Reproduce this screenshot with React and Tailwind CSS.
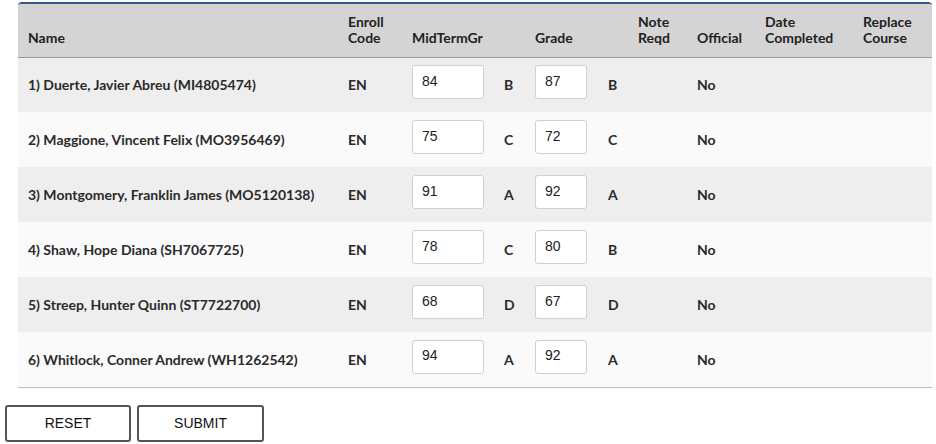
import React from 'react'

const ROWS = [
  { name: '1) Duerte, Javier Abreu (MI4805474)', mid: '84', midL: 'B', grade: '87', gradeL: 'B' },
  { name: '2) Maggione, Vincent Felix (MO3956469)', mid: '75', midL: 'C', grade: '72', gradeL: 'C' },
  { name: '3) Montgomery, Franklin James (MO5120138)', mid: '91', midL: 'A', grade: '92', gradeL: 'A' },
  { name: '4) Shaw, Hope Diana (SH7067725)', mid: '78', midL: 'C', grade: '80', gradeL: 'B' },
  { name: '5) Streep, Hunter Quinn (ST7722700)', mid: '68', midL: 'D', grade: '67', gradeL: 'D' },
  { name: '6) Whitlock, Conner Andrew (WH1262542)', mid: '94', midL: 'A', grade: '92', gradeL: 'A' },
]

const th = 'px-[10px] pb-[11px] text-left align-bottom font-bold leading-[16px] whitespace-nowrap'
const td = 'px-[10px] align-middle'

export default function App() {
  return (
    <div className="bg-white w-[936px] h-[444px] overflow-hidden text-[#222]" style={{ fontFamily: 'Lato, "Open Sans", sans-serif' }}>
      {/* Grade roster */}
      <div className="ml-[18px] mt-[2px] w-[914px] border-t-2 border-[#34578f] rounded-t-[4px] overflow-hidden">
        <table className="w-full table-fixed border-collapse text-[14px]">
          <colgroup>
            <col className="w-[320px]" />
            <col className="w-[64px]" />
            <col className="w-[92px]" />
            <col className="w-[31px]" />
            <col className="w-[73px]" />
            <col className="w-[30px]" />
            <col className="w-[59px]" />
            <col className="w-[68px]" />
            <col className="w-[98px]" />
            <col className="w-[79px]" />
          </colgroup>
          <thead>
            <tr className="h-[53px] bg-[#d4d4d4] border-b border-[#9a9a9a]">
              <th className={th}>Name</th>
              <th className={th}>Enroll<br />Code</th>
              <th className={th} colSpan={2}>MidTermGr</th>
              <th className={th} colSpan={2}>Grade</th>
              <th className={th}>Note<br />Reqd</th>
              <th className={th}>Official</th>
              <th className={th}>Date<br />Completed</th>
              <th className={th}>Replace<br />Course</th>
            </tr>
          </thead>
          <tbody className="font-bold text-[#2a2a2a]">
            {ROWS.map((r, i) => (
              <tr key={r.name} className={`h-[55px] ${i % 2 === 0 ? 'bg-[#eeeeee]' : 'bg-[#fafafa]'} ${i === ROWS.length - 1 ? 'border-b border-[#bdbdbd]' : ''}`}>
                <td className={`${td} whitespace-nowrap`}>{r.name}</td>
                <td className={td}>EN</td>
                <td className={td}>
                  <input
                    defaultValue={r.mid}
                    className="block w-[72px] h-[34px] -mt-[5px] px-[9px] pb-[3px] bg-white border border-[#d0d0d0] rounded-[3px] text-[14px] font-normal text-[#222] outline-none"
                    style={{ fontFamily: '"Liberation Sans", Arial, sans-serif' }}
                  />
                </td>
                <td className={td}>{r.midL}</td>
                <td className={td}>
                  <input
                    defaultValue={r.grade}
                    className="block w-[52px] h-[34px] -mt-[5px] px-[9px] pb-[3px] bg-white border border-[#d0d0d0] rounded-[3px] text-[14px] font-normal text-[#222] outline-none"
                    style={{ fontFamily: '"Liberation Sans", Arial, sans-serif' }}
                  />
                </td>
                <td className={td}>{r.gradeL}</td>
                <td className={td}></td>
                <td className={td}>No</td>
                <td className={td}></td>
                <td className={td}></td>
              </tr>
            ))}
          </tbody>
        </table>
      </div>

      {/* Actions */}
      <div className="flex gap-[6px] ml-[5px] mt-[17px]" style={{ fontFamily: '"Liberation Sans", Arial, sans-serif' }}>
        <button className="w-[126px] h-[37px] bg-white border-2 border-[#555] rounded-[3px] text-[14px] text-[#111]">RESET</button>
        <button className="w-[127px] h-[37px] bg-white border-2 border-[#555] rounded-[3px] text-[14px] text-[#111]">SUBMIT</button>
      </div>
    </div>
  )
}
